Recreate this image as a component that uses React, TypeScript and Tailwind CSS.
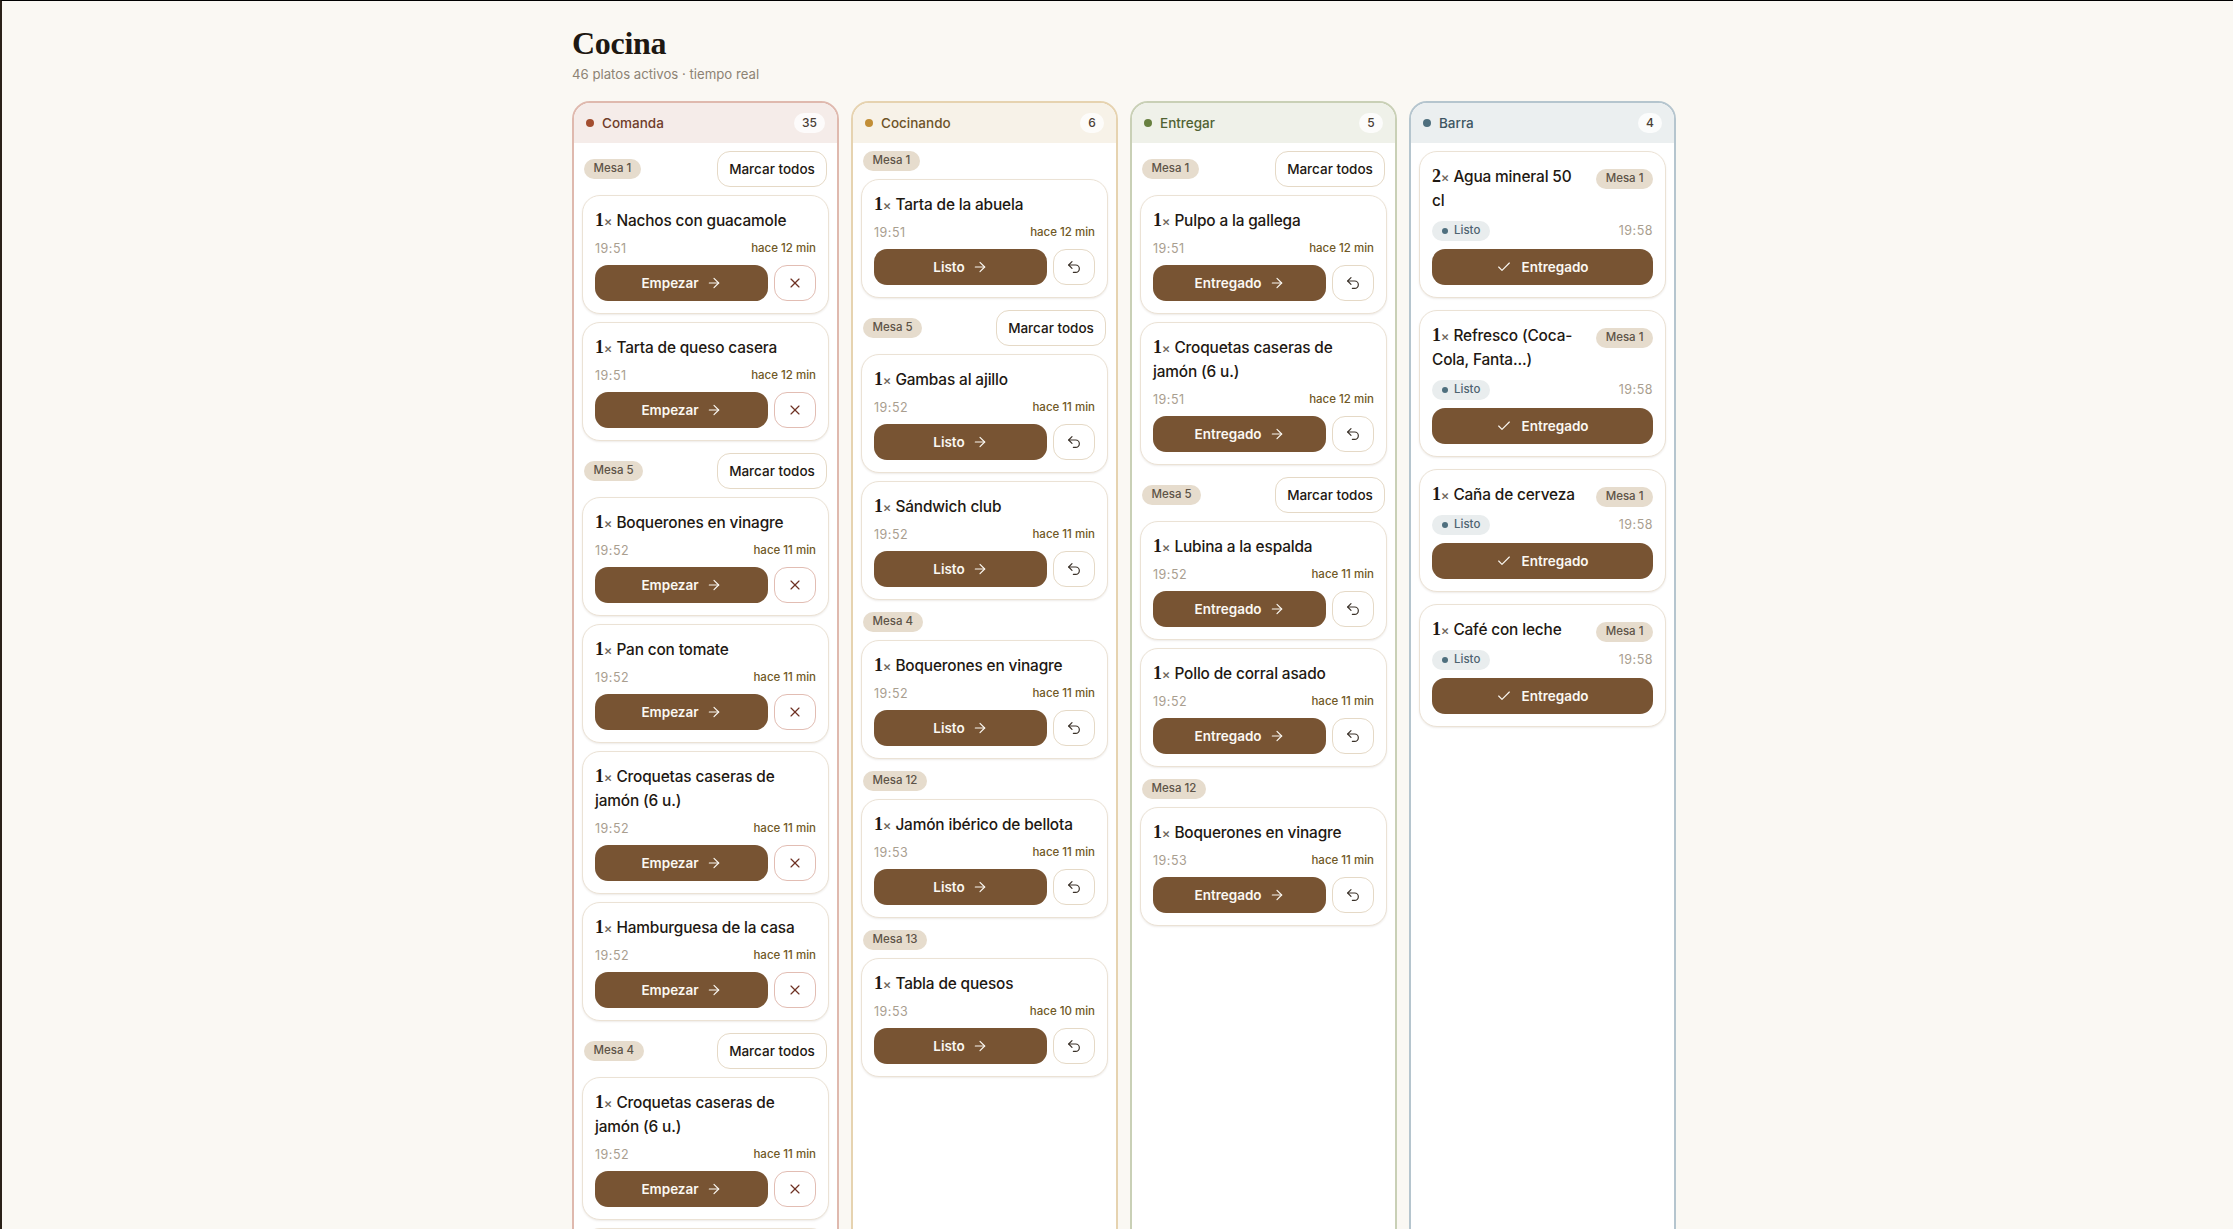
import { ArrowRight, Check, Undo2, X } from 'lucide-react';

const sans = 'font-[Inter,"Noto_Sans",sans-serif]';
const serif = 'font-["Liberation_Serif",serif]';

type Dish = { qty?: number; name: string; time: string; ago: string };
type Group = { mesa: string; dishes: Dish[] };

const columnStyles = {
  comanda: { border: 'border-[#dfb9ae]', head: 'bg-[#f5ece9]', dot: 'bg-[#a34e30]', title: 'text-[#6f3d2b]' },
  cocinando: { border: 'border-[#e6d3b0]', head: 'bg-[#f7f2e8]', dot: 'bg-[#c28e36]', title: 'text-[#6e5428]' },
  entregar: { border: 'border-[#c9d0b6]', head: 'bg-[#eff1e9]', dot: 'bg-[#688040]', title: 'text-[#506233]' },
  barra: { border: 'border-[#b5c5ce]', head: 'bg-[#ebeff0]', dot: 'bg-[#4f6f7e]', title: 'text-[#3d5663]' },
};

const croquetas = 'Croquetas caseras de jamón (6 u.)';

const comanda: Group[] = [
  {
    mesa: 'Mesa 1',
    dishes: [
      { name: 'Nachos con guacamole', time: '19:51', ago: 'hace 12 min' },
      { name: 'Tarta de queso casera', time: '19:51', ago: 'hace 12 min' },
    ],
  },
  {
    mesa: 'Mesa 5',
    dishes: [
      { name: 'Boquerones en vinagre', time: '19:52', ago: 'hace 11 min' },
      { name: 'Pan con tomate', time: '19:52', ago: 'hace 11 min' },
      { name: croquetas, time: '19:52', ago: 'hace 11 min' },
      { name: 'Hamburguesa de la casa', time: '19:52', ago: 'hace 11 min' },
    ],
  },
  {
    mesa: 'Mesa 4',
    dishes: [
      { name: croquetas, time: '19:52', ago: 'hace 11 min' },
      { name: 'Pan con tomate', time: '19:52', ago: 'hace 11 min' },
    ],
  },
];

const cocinando: Group[] = [
  { mesa: 'Mesa 1', dishes: [{ name: 'Tarta de la abuela', time: '19:51', ago: 'hace 12 min' }] },
  {
    mesa: 'Mesa 5',
    dishes: [
      { name: 'Gambas al ajillo', time: '19:52', ago: 'hace 11 min' },
      { name: 'Sándwich club', time: '19:52', ago: 'hace 11 min' },
    ],
  },
  { mesa: 'Mesa 4', dishes: [{ name: 'Boquerones en vinagre', time: '19:52', ago: 'hace 11 min' }] },
  { mesa: 'Mesa 12', dishes: [{ name: 'Jamón ibérico de bellota', time: '19:53', ago: 'hace 11 min' }] },
  { mesa: 'Mesa 13', dishes: [{ name: 'Tabla de quesos', time: '19:53', ago: 'hace 10 min' }] },
];

const entregar: Group[] = [
  {
    mesa: 'Mesa 1',
    dishes: [
      { name: 'Pulpo a la gallega', time: '19:51', ago: 'hace 12 min' },
      { name: croquetas, time: '19:51', ago: 'hace 12 min' },
    ],
  },
  {
    mesa: 'Mesa 5',
    dishes: [
      { name: 'Lubina a la espalda', time: '19:52', ago: 'hace 11 min' },
      { name: 'Pollo de corral asado', time: '19:52', ago: 'hace 11 min' },
    ],
  },
  { mesa: 'Mesa 12', dishes: [{ name: 'Boquerones en vinagre', time: '19:53', ago: 'hace 11 min' }] },
];

const barra: Dish[] = [
  { qty: 2, name: 'Agua mineral 50 cl', time: '19:58', ago: '' },
  { qty: 1, name: 'Refresco (Coca-Cola, Fanta...)', time: '19:58', ago: '' },
  { qty: 1, name: 'Caña de cerveza', time: '19:58', ago: '' },
  { qty: 1, name: 'Café con leche', time: '19:58', ago: '' },
];

function MesaPill({ label }: { label: string }) {
  return (
    <span className="flex h-5 shrink-0 items-center rounded-full bg-[#e6dccd] px-[9.5px] text-[11.5px] font-medium whitespace-nowrap text-[#5d5347]">
      {label}
    </span>
  );
}

function DishTitle({ dish }: { dish: Dish }) {
  return (
    <p className="text-[15.4px] leading-6 font-medium tracking-[-0.15px] text-[#1e1812]">
      <span className={`${serif} text-[18px] leading-none font-bold`}>{dish.qty ?? 1}</span>
      <span className="mr-[4px] text-[13px] leading-none text-[#6d645a]">×</span>
      {dish.name}
    </p>
  );
}

function Column({
  name,
  count,
  styles,
  children,
}: {
  name: string;
  count: number;
  styles: (typeof columnStyles)['comanda'];
  children: React.ReactNode;
}) {
  return (
    <section className={`flex h-[1200px] w-[267px] shrink-0 flex-col overflow-hidden rounded-[18px] border-2 bg-white ${styles.border}`}>
      <header className={`flex h-[40px] shrink-0 items-center px-[12px] ${styles.head}`}>
        <span className={`mr-[8px] size-2 rounded-full ${styles.dot}`} />
        <span className={`text-[13.5px] font-medium ${styles.title}`}>{name}</span>
        <span className="ml-auto flex h-5 min-w-6 items-center justify-center rounded-full bg-white/80 px-2 text-[12px] font-medium text-[#4a4036]">
          {count}
        </span>
      </header>
      <div className="flex flex-col px-[8px] pt-2">{children}</div>
    </section>
  );
}

function KitchenCard({ dish, action, danger }: { dish: Dish; action: string; danger?: boolean }) {
  return (
    <article className="rounded-[18px] border border-[#ebe2d5] bg-white px-3 pt-[13px] pb-3 shadow-[0_1px_2px_rgba(90,60,30,0.1)]">
      <DishTitle dish={dish} />
      <div className="mt-2 flex h-4 items-center justify-between text-[11.5px]">
        <span className="text-[12.5px] tracking-[0.5px] text-[#a99e8f]">{dish.time}</span>
        <span className="font-medium text-[#6f5826]">{dish.ago}</span>
      </div>
      <div className="mt-2 flex gap-[6px]">
        <button className="flex h-9 flex-1 items-center justify-center gap-[7px] rounded-[13px] bg-[#785433] text-[13.5px] font-semibold text-[#fbf8f2]">
          {action}
          <ArrowRight size={16} strokeWidth={1.75} />
        </button>
        <button
          className={`flex h-9 w-[42px] shrink-0 items-center justify-center rounded-[13px] border bg-white ${
            danger ? 'border-[#e2bdb3] text-[#6f3224]' : 'border-[#e5d9c6] text-[#3a3128]'
          }`}
        >
          {danger ? <X size={16} strokeWidth={1.75} /> : <Undo2 size={16} strokeWidth={1.75} />}
        </button>
      </div>
    </article>
  );
}

function Groups({ groups, action, danger }: { groups: Group[]; action: string; danger?: boolean }) {
  return (
    <>
      {groups.map((group, index) => (
        <div key={index} className="mb-3 flex flex-col gap-2">
          <div className="flex items-center justify-between px-[2px]">
            <MesaPill label={group.mesa} />
            {group.dishes.length > 1 ? (
              <button className="h-9 w-[110px] rounded-[13px] border border-[#e5d9c6] bg-white text-[13.5px] font-medium text-[#1e1812]">
                Marcar todos
              </button>
            ) : null}
          </div>
          {group.dishes.map((dish, i) => (
            <KitchenCard key={i} dish={dish} action={action} danger={danger} />
          ))}
        </div>
      ))}
    </>
  );
}

function BarCard({ dish }: { dish: Dish }) {
  return (
    <article className="rounded-[18px] border border-[#ebe2d5] bg-white px-3 pt-[13px] pb-3 shadow-[0_1px_2px_rgba(90,60,30,0.1)]">
      <div className="flex items-start justify-between gap-4">
        <DishTitle dish={dish} />
        <span className="mt-1">
          <MesaPill label="Mesa 1" />
        </span>
      </div>
      <div className="mt-2 flex h-5 items-center justify-between text-[11.5px]">
        <span className="flex h-5 items-center gap-[6px] rounded-full bg-[#e9edee] px-[10px] font-medium text-[#4f6471]">
          <span className="size-[6px] rounded-full bg-[#4f6f7e]" />
          Listo
        </span>
        <span className="text-[12.5px] tracking-[0.5px] text-[#a99e8f]">{dish.time}</span>
      </div>
      <button className="mt-2 flex h-9 w-full items-center justify-center gap-[9px] rounded-[13px] bg-[#785433] text-[13.5px] font-semibold text-[#fbf8f2]">
        <Check size={16} strokeWidth={1.75} />
        Entregado
      </button>
    </article>
  );
}

export default function App() {
  return (
    <div className={`${sans} flex h-[1229px] flex-col overflow-hidden border-t border-l-2 border-t-black border-l-[#2a2118] bg-[#faf8f3] pl-[570px]`}>
      <div className="pt-[23px]">
        <h1 className={`${serif} text-[32px] leading-[38px] font-bold tracking-[-0.3px] text-[#1e1812]`}>Cocina</h1>
        <p className="mt-[2px] text-[13.2px] leading-5 text-[#8d8374]">46 platos activos · tiempo real</p>
      </div>
      <div className="mt-[17px] flex gap-3">
        <Column name="Comanda" count={35} styles={columnStyles.comanda}>
          <Groups groups={comanda} action="Empezar" danger />
        </Column>
        <Column name="Cocinando" count={6} styles={columnStyles.cocinando}>
          <Groups groups={cocinando} action="Listo" />
        </Column>
        <Column name="Entregar" count={5} styles={columnStyles.entregar}>
          <Groups groups={entregar} action="Entregado" />
        </Column>
        <Column name="Barra" count={4} styles={columnStyles.barra}>
          <div className="flex flex-col gap-3">
            {barra.map((dish, i) => (
              <BarCard key={i} dish={dish} />
            ))}
          </div>
        </Column>
      </div>
    </div>
  );
}
